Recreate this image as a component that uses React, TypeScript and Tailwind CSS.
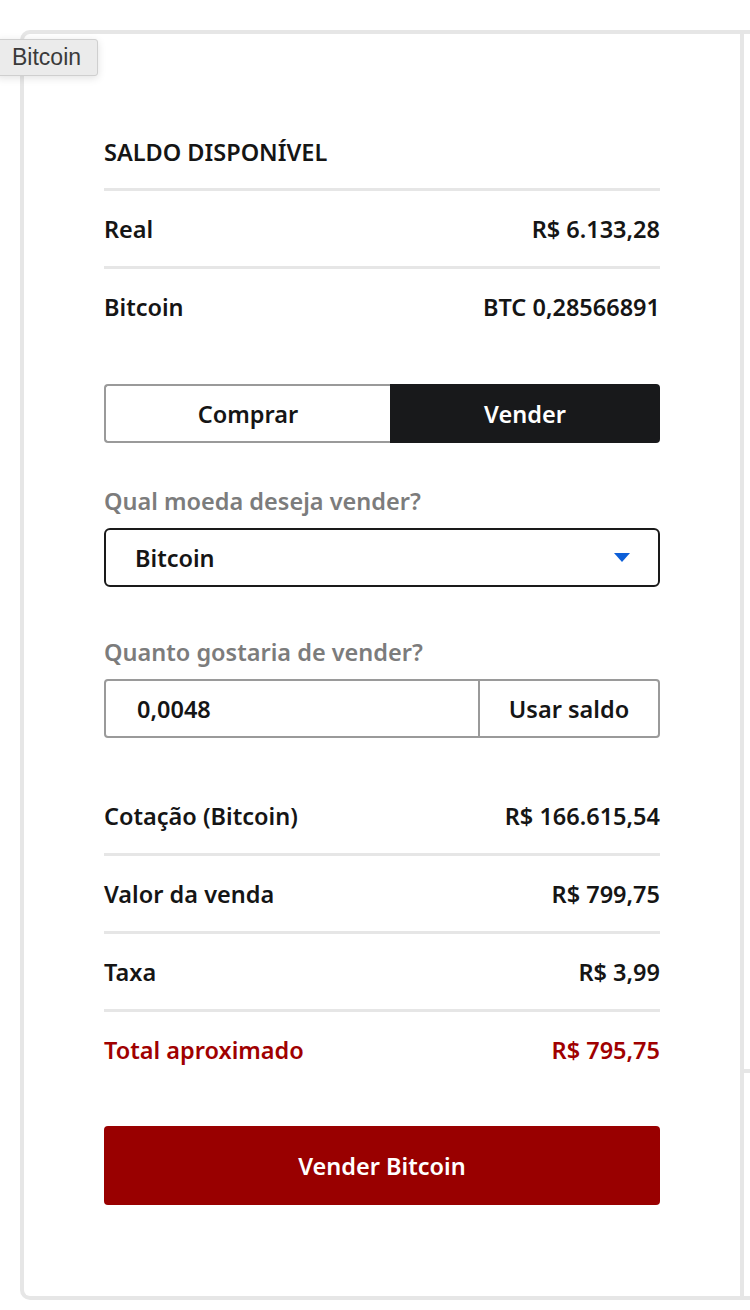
import React from 'react';

const Row = ({ label, value, divider = true, red = false }: { label: string; value: string; divider?: boolean; red?: boolean }) => (
  <div
    className={`flex items-center justify-between ${divider ? 'h-[78px] border-b-[3px] border-[#e6e6e6]' : 'h-[75px]'} ${
      red ? 'text-[#a00000]' : 'text-[#151515]'
    }`}
  >
    <span>{label}</span>
    <span>{value}</span>
  </div>
);

const App = () => {
  return (
    <div className="relative h-[1310px] w-[750px] overflow-hidden bg-white font-['Noto_Sans',sans-serif]">
      {/* tooltip */}
      <div className="absolute left-[-4px] top-[39px] z-10 flex h-[37px] w-[102px] items-center rounded-[3px] border border-[#cfcfcf] bg-[#ebebeb] pl-[15px] font-['Liberation_Sans',sans-serif] text-[23px] text-[#3a3a3a] shadow-[0_2px_8px_rgba(0,0,0,0.12)]">
        Bitcoin
      </div>

      <div className="ml-[20px] mt-[30px] flex h-[1270px] w-[740px] rounded-l-[10px] border-4 border-r-0 border-[#e6e6e6]">
        <div className="w-[716px] shrink-0 px-[80px] pt-[103px] text-[23.5px] font-semibold leading-[30px]">
          <h2 className="text-[#151515]">SALDO DISPONÍVEL</h2>
          <div className="mt-[21px] border-b-[3px] border-[#e6e6e6]" />
          <Row label="Real" value="R$ 6.133,28" />
          <Row label="Bitcoin" value="BTC 0,28566891" divider={false} />

          <div className="mt-[40px] flex h-[59px]">
            <button className="w-[286px] rounded-l-[4px] border-2 border-r-0 border-[#9a9a9a] bg-white text-[#151515]">
              Comprar
            </button>
            <button className="flex-1 rounded-r-[4px] bg-[#18191b] text-white">Vender</button>
          </div>

          <p className="mt-[43px] text-[#7c7c7c]">Qual moeda deseja vender?</p>
          <div className="mt-[12px] flex h-[59px] items-center justify-between rounded-[6px] border-2 border-[#1a1a1a] pl-[29px] pr-[28px] text-[#151515]">
            <span>Bitcoin</span>
            <svg width="16" height="9" viewBox="0 0 16 9">
              <path d="M0 0h16L8 9z" fill="#0d5fd8" />
            </svg>
          </div>

          <p className="mt-[50px] text-[#7c7c7c]">Quanto gostaria de vender?</p>
          <div className="mt-[12px] flex h-[59px] rounded-[4px] border-2 border-[#9a9a9a] text-[#151515]">
            <div className="flex w-[374px] items-center border-r-2 border-[#9a9a9a] pl-[31px]">0,0048</div>
            <button className="flex-1">Usar saldo</button>
          </div>

          <div className="mt-[40px]">
            <Row label="Cotação (Bitcoin)" value="R$ 166.615,54" />
            <Row label="Valor da venda" value="R$ 799,75" />
            <Row label="Taxa" value="R$ 3,99" />
            <Row label="Total aproximado" value="R$ 795,75" divider={false} red />
          </div>

          <button className="mt-[39px] h-[79px] w-full rounded-[4px] bg-[#990000] text-white">Vender Bitcoin</button>
        </div>

        <div className="flex-1 border-l-4 border-[#e6e6e6]">
          <div className="h-[1039px] border-b-4 border-[#e6e6e6]" />
        </div>
      </div>
    </div>
  );
};

export default App;
